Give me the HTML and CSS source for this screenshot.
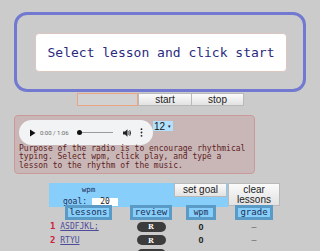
FILE: index.html
```html
<!DOCTYPE html>
<html>
<head>
<meta charset="utf-8">
<link rel="stylesheet" href="styles.css">
</head>
<body>
<div class="hero">
  <div class="msg">Select lesson and click start</div>
</div>
<div class="controls">
  <div class="blank"></div>
  <div class="btn start">start</div>
  <div class="btn stop">stop</div>
</div>
<div class="radio">
  <div class="radio-top">
    <div class="audio">
      <svg class="play" width="7" height="8" viewBox="0 0 7 8"><path d="M1 0.5 L6.5 4 L1 7.5 Z" fill="#111"/></svg>
      <span class="time">0:00 / 1:06</span>
      <div class="track"><span class="dot"></span></div>
      <svg class="vol" width="9" height="8" viewBox="0 0 9 8"><path d="M0 2.5 H2 L4.5 0.3 V7.7 L2 5.5 H0 Z" fill="#222"/><path d="M5.6 2.3 Q6.8 4 5.6 5.7" stroke="#222" stroke-width="0.9" fill="none"/><path d="M6.7 1.2 Q8.6 4 6.7 6.8" stroke="#222" stroke-width="0.9" fill="none"/></svg>
      <svg class="kebab" width="3" height="9" viewBox="0 0 3 9"><circle cx="1.5" cy="1.2" r="0.9" fill="#222"/><circle cx="1.5" cy="4.5" r="0.9" fill="#222"/><circle cx="1.5" cy="7.8" r="0.9" fill="#222"/></svg>
    </div>
    <div class="sel">12 <span class="caret">&#9662;</span></div>
  </div>
  <p class="about">Purpose of the radio is to encourage rhythmical typing. Select wpm, click play, and type a lesson to the rhythm of the music.</p>
</div>
<div class="panel">
  <div class="top">
    <div class="blue">
      <div class="goalbox">
        <div class="wpmlabel">wpm</div>
        <div class="goalrow"><span>goal:</span><span class="goalin">20</span></div>
      </div>
      <div class="btn setgoal">set goal</div>
    </div>
    <div class="btn clear">clear<br>lessons</div>
  </div>
  <div class="grid">
    <div class="hcell"><span class="hbox">lessons</span></div>
    <div class="hcell"><span class="hbox">review</span></div>
    <div class="hcell"><span class="hbox wpmh">wpm</span></div>
    <div class="hcell"><span class="hbox">grade</span></div>

    <div class="lesson"><span class="num">1</span> <span class="link">ASDFJKL;</span></div>
    <div class="cell"><span class="pill"><span class="r">R</span></span></div>
    <div class="cell val">0</div>
    <div class="cell dash">–</div>

    <div class="lesson"><span class="num">2</span> <span class="link">RTYU</span></div>
    <div class="cell"><span class="pill"><span class="r">R</span></span></div>
    <div class="cell val">0</div>
    <div class="cell dash">–</div>

    <div class="lesson"></div>
    <div class="cell"><span class="pill"></span></div>
    <div class="cell"></div>
    <div class="cell"></div>
  </div>
</div>
</body>
</html>
```
FILE: styles.css
```css
html, body {
  margin: 0;
  padding: 0;
  background: #cbcbcb;
  overflow: hidden;
}
body {
  width: 320px;
  height: 251px;
  font-family: "Liberation Sans", Arial, sans-serif;
}
.hero {
  margin: 12px 0 0 14px;
  width: 286px;
  height: 74px;
  border: 3px solid #7179d1;
  border-radius: 13px;
  display: flex;
  align-items: flex-start;
}
.msg {
  margin: 18px 0 0 18px;
  width: 250px;
  height: 37px;
  background: #fff;
  border: 1px solid #dcc6c0;
  border-radius: 4px;
  display: flex;
  align-items: center;
  justify-content: center;
  font-family: "DejaVu Sans Mono", monospace;
  font-size: 13px;
  color: #2a2a80;
}
.controls {
  display: flex;
  margin: 1px 0 0 77px;
  height: 13px;
}
.blank {
  width: 59px;
  height: 11px;
  border: 1px solid #eaa585;
  background: #d2d2d2;
}
.btn {
  box-sizing: border-box;
  background: linear-gradient(#fbfbfb, #e2e2e2);
  border: 1px solid #b9b9b9;
  color: #1c1c1c;
  font-size: 10px;
  display: flex;
  align-items: center;
  justify-content: center;
  text-align: center;
  line-height: 10px;
}
.start { width: 54px; height: 13px; }
.stop { width: 52px; height: 13px; border-left: none; }
.radio {
  margin: 9px 0 0 14px;
  width: 239px;
  height: 57px;
  border: 1px solid #c99a9a;
  border-radius: 4px;
  background: #c9b7b7;
}
.radio-top {
  display: flex;
  align-items: flex-start;
  margin: 4px 0 0 4px;
}
.audio {
  width: 134px;
  height: 25px;
  border-radius: 13px;
  background: #f1f3f4;
  display: flex;
  align-items: center;
}
.play { margin-left: 10px; }
.time {
  margin-left: 4px;
  font-family: Roboto, sans-serif;
  font-size: 6px;
  color: #666;
  width: 34px;
}
.track {
  width: 34px;
  height: 1px;
  background: #9a9a9a;
  position: relative;
  margin-left: 5px;
}
.dot {
  position: absolute;
  left: -2px;
  top: -2px;
  width: 5px;
  height: 5px;
  border-radius: 50%;
  background: #111;
}
.vol { margin-left: 10px; }
.kebab { margin-left: 8px; }
.sel {
  margin-top: 1px;
  width: 20px;
  height: 10px;
  background: #b3e1fd;
  font-size: 10px;
  line-height: 10px;
  color: #111;
  padding-left: 1px;
  box-sizing: border-box;
}
.caret { font-size: 5px; vertical-align: 2px; }
.about {
  margin: 0 0 0 4px;
  width: 229px;
  font-family: "DejaVu Sans Mono", monospace;
  font-size: 8px;
  line-height: 8.4px;
  color: #5e1d1d;
}
.panel {
  margin: 9px 0 0 49px;
  width: 231px;
}
.top {
  display: flex;
  height: 24px;
}
.blue {
  width: 179px;
  height: 24px;
  background: #87cefa;
  display: flex;
  justify-content: space-between;
}
.goalbox {
  width: 79px;
  display: flex;
  flex-direction: column;
  align-items: center;
  font-family: "DejaVu Sans Mono", monospace;
  font-size: 8px;
  color: #1e2e5a;
}
.wpmlabel {
  margin-top: 2px;
  height: 9px;
  line-height: 9px;
  font-size: 7.5px;
}
.goalrow {
  margin-top: 3px;
  display: flex;
  align-items: center;
  gap: 5px;
  line-height: 9px;
  padding-left: 4px;
}
.goalin {
  width: 26px;
  height: 8px;
  background: #fff;
  text-align: center;
  line-height: 8px;
  color: #222;
}
.setgoal {
  width: 53px;
  height: 14px;
  margin-right: 1px;
}
.clear {
  width: 52px;
  height: 23px;
}
.grid {
  display: grid;
  grid-template-columns: 79px 46px 54px 52px;
  grid-template-rows: 15px;
  grid-auto-rows: 13.5px;
  margin-top: -2px;
}
.hcell {
  height: 15px;
  display: flex;
  justify-content: center;
}
.hbox {
  box-sizing: border-box;
  height: 15px;
  border: 3px solid #5a9ac6;
  background: #87cefa;
  padding: 0 2px;
  font-family: "DejaVu Sans Mono", monospace;
  font-size: 9px;
  line-height: 9px;
  color: #1a2f55;
}
.hbox.wpmh { font-size: 8px; padding: 0 5px; }
.lesson {
  font-family: "DejaVu Sans Mono", monospace;
  font-size: 8px;
  line-height: 13.5px;
  padding-left: 1px;
  white-space: nowrap;
}
.num { color: #d0203e; font-size: 9px; font-weight: bold; }
.link { color: #4d4b9c; text-decoration: underline; }
.cell {
  display: flex;
  justify-content: center;
  align-items: center;
}
.pill {
  width: 29px;
  height: 10px;
  border-radius: 5px;
  background: #3c3c3c;
  display: flex;
  justify-content: center;
  align-items: center;
}
.r {
  font-family: "DejaVu Serif", serif;
  font-weight: bold;
  font-size: 7px;
  line-height: 7px;
  color: #fff;
}
.val {
  font-size: 9px;
  font-weight: bold;
  color: #222;
}
.dash {
  font-size: 9px;
  color: #666;
}
```
